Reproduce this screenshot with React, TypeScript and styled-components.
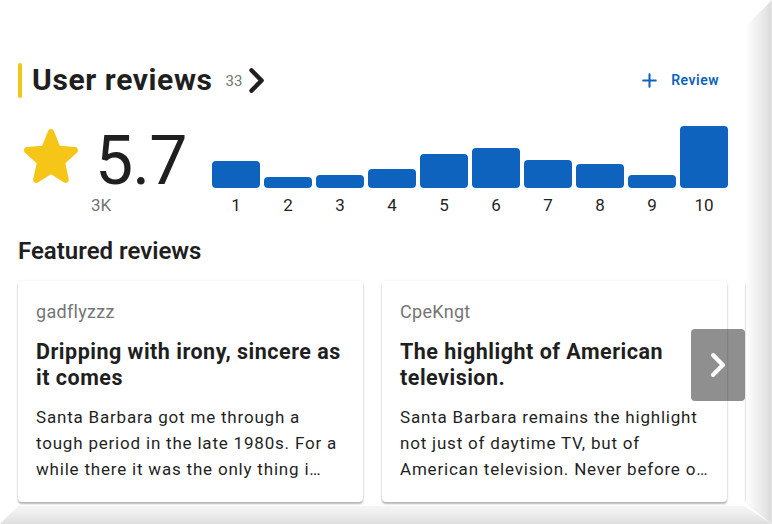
import React from "react";
import styled, { createGlobalStyle } from "styled-components";

const GlobalStyle = createGlobalStyle`
  html, body { margin: 0; padding: 0; background: #fff; }
  body {
    font-family: Roboto, "Liberation Sans", Arial, sans-serif;
    color: #1f1f1f;
    -webkit-font-smoothing: antialiased;
  }
  * { box-sizing: border-box; }
`;

const Frame = styled.div`
  position: relative;
  width: 772px;
  height: 524px;
  overflow: hidden;
  background: #fff;
`;

const Section = styled.section`
  padding: 60px 0 0 18px;
  width: 772px;
`;

const Header = styled.div`
  display: flex;
  align-items: center;
  justify-content: space-between;
  width: 710px;
  height: 40px;
`;

const TitleGroup = styled.div`
  display: flex;
  align-items: center;
`;

const AccentBar = styled.span`
  width: 4px;
  height: 35px;
  border-radius: 2px;
  background: #f5c518;
  margin-right: 10px;
`;

const Title = styled.h2`
  margin: 0;
  font-size: 30px;
  line-height: 36px;
  font-weight: 700;
  color: #1f1f1f;
  letter-spacing: 0.6px;
`;

const Count = styled.span`
  margin-left: 13px;
  font-size: 15px;
  line-height: 20px;
  color: #757575;
  padding-top: 2px;
`;

const ChevronLink = styled.span`
  display: flex;
  margin-left: 2px;
  color: #1f1f1f;
`;

const ReviewButton = styled.button`
  display: flex;
  align-items: center;
  gap: 9px;
  border: 0;
  background: none;
  padding: 0 9px 0 0;
  color: #0e63be;
  font-family: inherit;
  font-size: 14px;
  font-weight: 600;
  letter-spacing: 0.5px;
  cursor: pointer;
`;

const RatingRow = styled.div`
  display: flex;
  align-items: flex-end;
  width: 710px;
  margin-top: 26px;
`;

const RatingBlock = styled.div`
  display: flex;
  flex-direction: column;
  align-items: center;
  margin-left: 6px;
`;

const ScoreLine = styled.div`
  display: flex;
  align-items: flex-start;
  gap: 17px;
`;

const StarIcon = styled.svg`
  width: 54px;
  height: 54px;
  margin-top: 3px;
  fill: #f5c518;
`;

const Score = styled.span`
  font-size: 68px;
  line-height: 70px;
  font-weight: 400;
  letter-spacing: -1px;
  color: #1f1f1f;
`;

const Votes = styled.span`
  margin-top: 1px;
  margin-right: 8px;
  font-size: 17px;
  line-height: 16px;
  color: #757575;
`;

const Histogram = styled.div`
  display: grid;
  grid-template-columns: repeat(10, 1fr);
  column-gap: 4px;
  width: 516px;
  margin-left: auto;
`;

const HistColumn = styled.div`
  display: flex;
  flex-direction: column;
  align-items: center;
  justify-content: flex-end;
  height: 87px;
`;

const Bar = styled.div`
  width: 100%;
  border-radius: 4px;
  background: #0e63be;
`;

const BarLabel = styled.span`
  margin-top: 9px;
  font-size: 17px;
  line-height: 16px;
  color: #1f1f1f;
`;

const SubTitle = styled.h3`
  margin: 22px 0 0;
  font-size: 24px;
  line-height: 32px;
  font-weight: 600;
  color: #1f1f1f;
`;

const Carousel = styled.div`
  position: relative;
  display: flex;
  gap: 19px;
  margin-top: 14px;
`;

const Card = styled.article`
  flex: 0 0 345px;
  width: 345px;
  height: 221px;
  padding: 19px 18px 18px;
  background: #fff;
  border-radius: 4px;
  box-shadow: 0 2px 2px rgba(0, 0, 0, 0.28), 0 0 3px rgba(0, 0, 0, 0.08);
`;

const Author = styled.div`
  font-size: 18px;
  line-height: 24px;
  color: #757575;
  letter-spacing: 0.3px;
`;

const CardTitle = styled.h4`
  margin: 15px 0 0;
  font-size: 21.5px;
  line-height: 26px;
  font-weight: 700;
  letter-spacing: 0.5px;
  color: #1f1f1f;
`;

const CardBody = styled.p`
  margin: 13px 0 0;
  font-size: 17px;
  line-height: 26px;
  letter-spacing: 0.8px;
  color: #1f1f1f;
  display: -webkit-box;
  -webkit-line-clamp: 3;
  -webkit-box-orient: vertical;
  overflow: hidden;
`;

const NextButton = styled.button`
  position: absolute;
  left: 673px;
  top: 48px;
  width: 54px;
  height: 72px;
  border: 0;
  border-radius: 4px;
  background: rgba(0, 0, 0, 0.44);
  display: flex;
  align-items: center;
  justify-content: center;
  color: #fff;
  padding: 0;
  cursor: pointer;
`;

const RightBevel = styled.div`
  position: absolute;
  top: 0;
  right: 0;
  bottom: 0;
  width: 26px;
  background: linear-gradient(to right, #fdfdfd 0%, #f1f1f1 40%, #e4e4e4 80%, #dadada 92%, #e6e6e6 100%);
  clip-path: polygon(0 26px, 100% 0, 100% 100%, 0 calc(100% - 20px));
`;

const BottomBevel = styled.div`
  position: absolute;
  left: 0;
  right: 0;
  bottom: 0;
  height: 18px;
  background: linear-gradient(to bottom, #f6f6f6 0%, #ececec 50%, #dedede 100%);
  clip-path: polygon(18px 0, calc(100% - 28px) 0, 100% 100%, 0 100%);
`;

const bars = [27, 11, 13, 19, 34, 40, 28, 24, 13, 62];

const reviews = [
  {
    author: "gadflyzzz",
    title: "Dripping with irony, sincere as it comes",
    body:
      "Santa Barbara got me through a tough period in the late 1980s. For a while there it was the only thing i looked forward to every single day.",
  },
  {
    author: "CpeKngt",
    title: "The highlight of American television.",
    body:
      "Santa Barbara remains the highlight not just of daytime TV, but of American television. Never before or since has a show been so daring.",
  },
  {
    author: "lorenzo",
    title: "A soap like no other",
    body: "Funny, warm and wonderfully strange from start to finish.",
  },
];

const Star = () => (
  <StarIcon viewBox="0 0 24 24" aria-hidden>
    <path d="M12 20.1l5.82 3.682c1.066.675 2.37-.322 2.09-1.584l-1.543-6.926 5.146-4.667c.94-.85.435-2.465-.799-2.567l-6.773-.602L13.29.89a1.38 1.38 0 0 0-2.581 0l-2.65 6.53-6.774.602C.052 8.126-.453 9.74.486 10.59l5.147 4.666-1.542 6.926c-.28 1.262 1.023 2.26 2.09 1.585L12 20.099z" />
  </StarIcon>
);

const Chevron = ({ size }: { size: number }) => (
  <svg width={size} height={size} viewBox="0 0 24 24" fill="currentColor" aria-hidden>
    <path d="M5.622.631A2.153 2.153 0 0 0 5 2.147c0 .568.224 1.113.622 1.515l8.249 8.34-8.25 8.34a2.16 2.16 0 0 0-.548 2.07c.196.74.768 1.317 1.499 1.515a2.104 2.104 0 0 0 2.048-.555l9.758-9.866a2.153 2.153 0 0 0 0-3.03L8.62.61C7.812-.207 6.450-.207 5.622.63z" />
  </svg>
);

const Plus = () => (
  <svg width={25} height={25} viewBox="0 0 24 24" fill="currentColor" aria-hidden>
    <path d="M18 13h-5v5c0 .55-.45 1-1 1s-1-.45-1-1v-5H6c-.55 0-1-.45-1-1s.45-1 1-1h5V6c0-.55.45-1 1-1s1 .45 1 1v5h5c.55 0 1 .45 1 1s-.45 1-1 1z" />
  </svg>
);

export default function App() {
  return (
    <>
      <GlobalStyle />
      <Frame>
        <Section>
          <Header>
            <TitleGroup>
              <AccentBar />
              <Title>User reviews</Title>
              <Count>33</Count>
              <ChevronLink>
                <Chevron size={25} />
              </ChevronLink>
            </TitleGroup>
            <ReviewButton>
              <Plus />
              Review
            </ReviewButton>
          </Header>

          <RatingRow>
            <RatingBlock>
              <ScoreLine>
                <Star />
                <Score>5.7</Score>
              </ScoreLine>
              <Votes>3K</Votes>
            </RatingBlock>
            <Histogram>
              {bars.map((h, i) => (
                <HistColumn key={i}>
                  <Bar style={{ height: h }} />
                  <BarLabel>{i + 1}</BarLabel>
                </HistColumn>
              ))}
            </Histogram>
          </RatingRow>

          <SubTitle>Featured reviews</SubTitle>

          <Carousel>
            {reviews.map((r) => (
              <Card key={r.author}>
                <Author>{r.author}</Author>
                <CardTitle>{r.title}</CardTitle>
                <CardBody>{r.body}</CardBody>
              </Card>
            ))}
            <NextButton aria-label="Next">
              <Chevron size={24} />
            </NextButton>
          </Carousel>
        </Section>
        <RightBevel />
        <BottomBevel />
      </Frame>
    </>
  );
}
